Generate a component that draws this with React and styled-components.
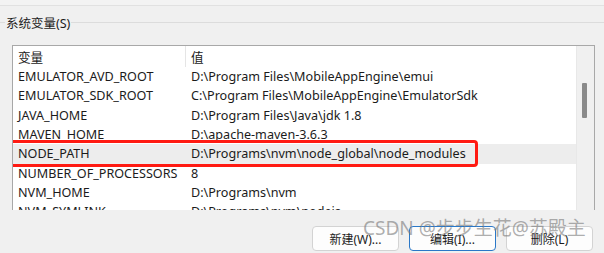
import React from 'react';
import styled, { createGlobalStyle } from 'styled-components';

const GlobalStyle = createGlobalStyle`
  html, body { margin: 0; padding: 0; }
  body {
    background: #f0f0f0;
    font-family: 'Noto Sans', 'Noto Sans CJK SC', sans-serif;
    color: #1b1b1b;
  }
`;

const Page = styled.div`
  position: relative;
  width: 604px;
  height: 253px;
  overflow: hidden;
  background: #f0f0f0;
`;

const TopStrip = styled.div`
  height: 5px;
  background: #f3f3f3;
  border-bottom: 1px solid #e1e1e1;
`;

const GroupHead = styled.div`
  display: flex;
  align-items: center;
  height: 22px;
  margin-top: 5px;
`;

const GroupLine = styled.div`
  height: 1px;
  background: #dcdcdc;
  flex: ${p => (p.$grow ? 1 : 'none')};
  width: ${p => (p.$grow ? 'auto' : '5px')};
`;

const GroupLabel = styled.span`
  font-size: 12.5px;
  padding: 0 1px;
  color: #1b1b1b;
`;

const ListBox = styled.div`
  display: flex;
  margin: 12px 0 0 12px;
  width: 583px;
  height: 165px;
  box-sizing: border-box;
  border: 1px solid #a8a8a8;
  border-bottom: none;
  background: #ffffff;
  overflow: hidden;
`;

const ListArea = styled.div`
  flex: 1;
  display: flex;
  flex-direction: column;
`;

const Row = styled.div`
  position: relative;
  display: grid;
  grid-template-columns: 173px 1fr;
  align-items: center;
  flex: none;
  height: ${p => (p.$header ? '21px' : '19.33px')};
  background: ${p => (p.$selected ? '#ededed' : 'transparent')};
  font-size: 12.6px;
  white-space: nowrap;
`;

const Cell = styled.div`
  padding-left: 5px;
  height: 100%;
  display: flex;
  align-items: center;
  box-sizing: border-box;
  border-right: ${p => (p.$divider ? '1px solid #e5e5e5' : 'none')};
`;

const Highlight = styled.div`
  position: absolute;
  left: -4px;
  top: -4px;
  width: 469px;
  height: 27px;
  box-sizing: border-box;
  border: 3.5px solid #ff1a12;
  border-radius: 4px;
  pointer-events: none;
`;

const ScrollBar = styled.div`
  position: relative;
  width: 17px;
  flex: none;
  background: #f0f0f0;
  border-left: 1px solid #e8e8e8;
`;

const Thumb = styled.div`
  position: absolute;
  left: 5px;
  top: 37px;
  width: 5px;
  height: 35px;
  background: #8a8a8a;
  border-radius: 1px;
`;

const ButtonRow = styled.div`
  display: flex;
  justify-content: flex-end;
  gap: 10px;
  padding-right: 11px;
  margin-top: 16px;
`;

const Button = styled.button`
  width: 87px;
  height: 25px;
  box-sizing: border-box;
  background: #fdfdfd;
  border: 1px solid ${p => (p.$focused ? '#2a78c8' : '#d3d3d3')};
  border-radius: 4px;
  font-family: 'Noto Sans', 'Noto Sans CJK SC', sans-serif;
  font-size: 12px;
  color: #1b1b1b;
  padding: 0;
`;

const Watermark = styled.div`
  position: absolute;
  left: 363px;
  top: 215px;
  font-family: 'Noto Sans', 'Noto Sans CJK SC', sans-serif;
  font-size: 19px;
  line-height: 26px;
  color: rgba(120, 120, 120, 0.6);
  white-space: nowrap;
  pointer-events: none;
`;

const vars = [
  ['EMULATOR_AVD_ROOT', 'D:\\Program Files\\MobileAppEngine\\emui'],
  ['EMULATOR_SDK_ROOT', 'C:\\Program Files\\MobileAppEngine\\EmulatorSdk'],
  ['JAVA_HOME', 'D:\\Program Files\\Java\\jdk 1.8'],
  ['MAVEN_HOME', 'D:\\apache-maven-3.6.3'],
  ['NODE_PATH', 'D:\\Programs\\nvm\\node_global\\node_modules'],
  ['NUMBER_OF_PROCESSORS', '8'],
  ['NVM_HOME', 'D:\\Programs\\nvm'],
  ['NVM_SYMLINK', 'D:\\Programs\\nvm\\nodejs'],
];

export default function App() {
  return (
    <Page>
      <GlobalStyle />
      <TopStrip />
      <GroupHead>
        <GroupLine />
        <GroupLabel>系统变量(S)</GroupLabel>
        <GroupLine $grow />
      </GroupHead>

      <ListBox>
        <ListArea>
          <Row $header>
            <Cell $divider>变量</Cell>
            <Cell>值</Cell>
          </Row>
          {vars.map(([name, value]) => (
            <Row key={name} $selected={name === 'NODE_PATH'}>
              <Cell>{name}</Cell>
              <Cell>{value}</Cell>
              {name === 'NODE_PATH' && <Highlight />}
            </Row>
          ))}
        </ListArea>
        <ScrollBar>
          <Thumb />
        </ScrollBar>
      </ListBox>

      <ButtonRow>
        <Button>新建(W)...</Button>
        <Button $focused>编辑(I)...</Button>
        <Button>删除(L)</Button>
      </ButtonRow>

      <Watermark>CSDN @步步生花@苏殿主</Watermark>
    </Page>
  );
}
